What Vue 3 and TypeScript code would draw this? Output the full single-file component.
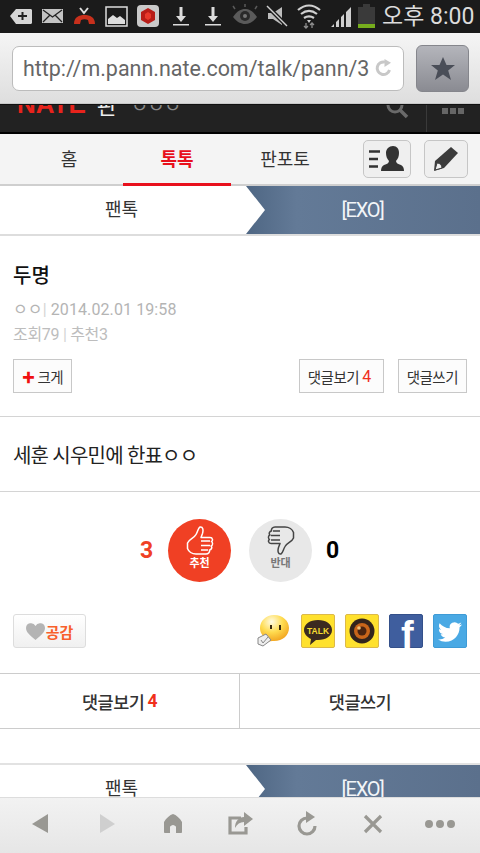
<template>
  <div class="phone">
    <!-- status bar icons live in one strip, they sit at irregular spacing -->
    <div class="status">
      <svg class="status-icons" width="378" height="33" viewBox="0 0 378 33">
        <path d="M10 16 16 9h15a2 2 0 0 1 1 1v13a2 2 0 0 1-1 1H16z" fill="#d6d6d6" />
        <path d="M18 16h9M22.500 12v8" stroke="#222" stroke-width="2" />
        <rect x="42" y="9" width="21" height="14" fill="#c4c4c4" />
        <path d="M43 10 52.500 17 62 10M43 22 50 15M62 22 55 15" stroke="#222" stroke-width="1.300" fill="none" />
        <path d="M74 24c0-7 5-9 10.500-9S95 17 95 24h-6l-1-4c-2-1-5-1-7 0l-1 4z" fill="#c8301c" />
        <path d="M80 8l4 5 4-5 M84 13l-1-1" stroke="#ddd" stroke-width="2" fill="none" />
        <rect x="106" y="7" width="21" height="19" fill="none" stroke="#ddd" stroke-width="1.500" />
        <path d="M108 24v-5l5-4 4 3 3-2 5 4v4z" fill="#ddd" />
        <rect x="137" y="5" width="22" height="22" rx="4" fill="#c9c9c9" />
        <path d="M148 8l7 4v8l-7 4-7-4v-8z" fill="#b81d18" />
        <path d="M148 12l3 2v4l-3 2-3-2v-4z" fill="#e8392c" />
        <g v-for="x in downloadXs" :key="x" fill="#dcdcdc">
          <path :d="`M${x + 6.500} 7h3v9h3.500l-5 6-5-6h3.500z`" />
          <rect :x="x" y="24" width="16" height="1.500" />
        </g>
        <path d="M233 17c4-6 8-8 12-8s8 2 12 8c-4 5-8 7-12 7s-8-2-12-7z" fill="#5a5a5a" />
        <circle cx="245" cy="16" r="5" fill="#2a2a2a" />
        <circle cx="245" cy="16" r="2" fill="#777" />
        <path d="M235 9l-2-3M245 7V4M255 9l2-3" stroke="#5a5a5a" stroke-width="1.500" />
        <path d="M268 13h5l9-6v18l-9-6h-5z" fill="#bdbdbd" />
        <path d="M267 6l20 20" stroke="#1c1c1c" stroke-width="4" />
        <path d="M267 6l20 20" stroke="#d0d0d0" stroke-width="1.500" />
        <path d="M298 10c7-6 15-6 22 0M301 14c5-4 11-4 16 0M304 18c3-2 7-2 10 0" stroke="#cfcfcf" stroke-width="2.200" fill="none" />
        <path d="M307 20h4l-2 3z" fill="#cfcfcf" />
        <path d="M306 23v5M304 26l2 2 2-2M312 28v-5M310 25l2-2 2 2" stroke="#8f8f8f" stroke-width="1.300" fill="none" />
        <path d="M331 27l3-3v3zM336 27v-5l3-3v8zM341 27V17l3-3v13zM346 27V12l5-5v20z" fill="#cfcfcf" />
        <rect x="358" y="7" width="17" height="20" fill="#3a3a3a" />
        <rect x="363" y="4" width="7" height="3" fill="#3a3a3a" />
        <rect x="358" y="24" width="17" height="4" fill="#76ad1d" />
      </svg>
      <span class="clock">오후 8:00</span>
    </div>

    <div class="browser-bar">
      <div class="url-box">
        <span class="url">http://m.pann.nate.com/talk/pann/3</span>
        <svg width="18" height="18" viewBox="0 0 18 18">
          <path d="M14.500 11A6.300 6.300 0 1 1 10 3.100" fill="none" stroke="#c8c8c8" stroke-width="3" />
          <path d="M9.500 0 16 3.800 9.500 8z" fill="#c8c8c8" />
        </svg>
      </div>
      <div class="star-btn">
        <svg width="26" height="25" viewBox="0 0 26 25">
          <path d="M13 1l3.500 8H25l-6.800 5.500L21 24l-8-5.500L5 24l2.800-9.500L1 9h8.500z" fill="#4a4e58" />
        </svg>
      </div>
    </div>

    <div class="page">
      <header class="nate-head">
        <div class="brand">
          <b class="logo">NATE</b>
          <b class="pan">판</b>
          <span class="who">ㅇㅇㅇ</span>
        </div>
        <svg class="search" width="24" height="14" viewBox="0 0 24 14">
          <circle cx="9" cy="0" r="7" fill="none" stroke="#6a6a6a" stroke-width="3" />
          <path d="M14 5l7 7" stroke="#6a6a6a" stroke-width="3.500" />
        </svg>
        <div class="menu-cell">
          <i v-for="n in 3" :key="n"></i>
        </div>
      </header>

      <nav class="tabs">
        <a v-for="t in navItems" :key="t" class="tab" :class="{ on: t === '톡톡' }">{{ t }}</a>
        <div class="tool-btn user-btn">
          <svg width="36" height="26" viewBox="0 0 36 26">
            <path d="M0 5.500h11M0 13h9M0 20.500h9" stroke="#333" stroke-width="2.500" />
            <path d="M24 0c4 0 6 3 6 7 0 3-1 6-3 8 0 2 2 3 5 4 2 1 3 3 3 6H12c0-3 1-5 3-6 3-1 5-2 5-4-2-2-3-5-3-8 0-4 3-7 7-7z" fill="#333" />
          </svg>
        </div>
        <div class="tool-btn pen-btn">
          <svg width="26" height="26" viewBox="0 0 26 26">
            <path d="M18 1l7 6L11 22l-10 3 1-10z" fill="#3c3c3c" />
            <path d="M4 17c3 0 5 2 5 5l-7 2z" fill="#f0f0f0" stroke="#3c3c3c" stroke-width="1" />
          </svg>
        </div>
      </nav>

      <div class="crumb">
        <div class="crumb-left">팬톡</div>
        <div class="crumb-right">[EXO]</div>
      </div>

      <section class="post-head">
        <h1>두명</h1>
        <p class="meta">ㅇㅇ<em>|</em> 2014.02.01 19:58</p>
        <p class="meta small">조회79 <em>|</em> 추천3</p>
        <div class="post-actions">
          <a class="mini-btn"><b class="plus">✚</b> 크게</a>
          <span class="spacer"></span>
          <a class="mini-btn view-btn">댓글보기 <span class="red">4</span></a>
          <a class="mini-btn">댓글쓰기</a>
        </div>
      </section>

      <section class="post-body">세훈 시우민에 한표ㅇㅇ</section>

      <section class="vote">
        <span class="count up">3</span>
        <div class="circle yes">
          <svg width="28" height="29" viewBox="0 0 28 29">
            <path :d="thumbPath" fill="none" stroke="#fff" stroke-width="1.500" stroke-linejoin="round" />
            <path d="M15 15h9M15 19.500h9M15 24h7" stroke="#fff" stroke-width="1.300" />
          </svg>
          <span>추천</span>
        </div>
        <div class="circle no">
          <svg width="28" height="29" viewBox="0 0 28 29">
            <g transform="rotate(180 14 14.500)">
              <path :d="thumbPath" fill="none" stroke="#444" stroke-width="1.500" stroke-linejoin="round" />
              <path d="M15 15h9M15 19.500h9M15 24h7" stroke="#444" stroke-width="1.300" />
            </g>
          </svg>
          <span>반대</span>
        </div>
        <span class="count">0</span>
      </section>

      <section class="share">
        <a class="like">
          <svg width="19" height="17" viewBox="0 0 19 17">
            <path d="M9.500 17C4 12 0 9.500 0 5a5 5 0 0 1 9.500-2A5 5 0 0 1 19 5c0 4.500-4 7-9.500 12z" fill="#b4b4b4" />
          </svg>
          공감
        </a>
        <span class="spacer"></span>
        <svg class="sns" width="34" height="34" viewBox="0 0 34 34">
          <defs>
            <radialGradient id="smile" cx="0.400" cy="0.250" r="0.850">
              <stop offset="0" stop-color="#fffbe4" />
              <stop offset="0.450" stop-color="#ffdc50" />
              <stop offset="1" stop-color="#ee9412" />
            </radialGradient>
          </defs>
          <path d="M17 1c9 0 15 6 15 13s-6 13-15 13c-2 0-5 0-7 1 1-2 0-3-1-4-4-2-6-6-6-10C3 7 9 1 17 1z" fill="url(#smile)" />
          <path d="M14 11v4M23 11v5" stroke="#3a2a10" stroke-width="2" />
          <path d="M1 24l8-4 5 6-8 6-5-2z" fill="#eee" stroke="#888" />
          <path d="M4 26l2 3 5-6" fill="none" stroke="#888" />
        </svg>
        <svg class="sns" width="34" height="34" viewBox="0 0 34 34">
          <rect x="0.500" y="0.500" width="33" height="33" rx="1.500" fill="#ffe12e" stroke="#dcb94a" />
          <path d="M17 6c8 0 14 4 14 10s-6 10-14 10h-2l-6 5 1-6c-4-2-7-5-7-9C3 10 9 6 17 6z" fill="#3b2a20" />
          <text x="17" y="19.500" class="talk">TALK</text>
        </svg>
        <svg class="sns" width="34" height="34" viewBox="0 0 34 34">
          <rect x="0.500" y="0.500" width="33" height="33" rx="1.500" fill="#ffe12e" stroke="#dcb94a" />
          <circle cx="17" cy="17" r="12.500" fill="#33241c" />
          <circle cx="17" cy="17" r="8" fill="#c8651a" />
          <circle cx="17" cy="17" r="4.500" fill="#4a2410" />
          <circle cx="14" cy="14" r="1.800" fill="#f2c27a" />
        </svg>
        <svg class="sns" width="34" height="34" viewBox="0 0 34 34">
          <rect x="0.500" y="0.500" width="33" height="33" rx="1.500" fill="#3f5e9e" stroke="#34508a" />
          <text x="12" y="34" class="fb">f</text>
        </svg>
        <svg class="sns" width="34" height="34" viewBox="0 0 34 34">
          <rect x="0.500" y="0.500" width="33" height="33" rx="1.500" fill="#4aa9e4" stroke="#3f9bd6" />
          <path transform="translate(5 6) scale(1)" fill="#fff" :d="birdPath" />
        </svg>
      </section>

      <div class="big-tabs">
        <a>댓글보기 <span class="red">4</span></a>
        <a>댓글쓰기</a>
      </div>

      <div class="crumb lower">
        <div class="crumb-left">팬톡</div>
        <div class="crumb-right">[EXO]</div>
      </div>
    </div>

    <footer class="toolbar">
      <div v-for="b in toolbar" :key="b.name" class="tb-item">
        <svg width="30" height="30" viewBox="0 0 30 30">
          <path v-if="b.fill" :d="b.d" :fill="b.fill" />
          <path v-else :d="b.d" fill="none" :stroke="b.stroke" stroke-width="3.200" />
          <path v-if="b.extra" :d="b.extra" :fill="b.stroke" />
        </svg>
      </div>
    </footer>
  </div>
</template>

<script setup lang="ts">
interface ToolItem {
  name: string
  d: string
  fill?: string
  stroke?: string
  extra?: string
}

const navItems = ['홈', '톡톡', '판포토']
const downloadXs = [173, 205]

const thumbPath =
  'M1.500 17C3 13 8 12.500 10 8.500 12 5 12 2 14 1c3-.5 3.500 3 2.500 6.500L15 11.500h9c3 0 3 3.500 1.500 4 1.500 1 1.500 4-.5 4.500 1.500 1 .5 4-1.500 4 .5 2-1 4-3.500 4H10c-4 0-7.500-2.500-8.500-5.500z'

const birdPath =
  'M23.953 4.570a10 10 0 01-2.825.775 4.958 4.958 0 002.163-2.723c-.951.555-2.005.959-3.127 1.184a4.920 4.920 0 00-8.384 4.482C7.690 8.095 4.067 6.130 1.640 3.162a4.822 4.822 0 00-.666 2.475c0 1.710.870 3.213 2.188 4.096a4.904 4.904 0 01-2.228-.616v.060a4.923 4.923 0 003.946 4.827 4.996 4.996 0 01-2.212.085 4.936 4.936 0 004.604 3.417 9.867 9.867 0 01-6.102 2.105c-.390 0-.779-.023-1.170-.067a13.995 13.995 0 007.557 2.209c9.053 0 13.998-7.496 13.998-13.985 0-.210 0-.420-.015-.630A9.935 9.935 0 0024 4.590z'

const toolbar: ToolItem[] = [
  { name: 'back', d: 'M7 15 23 5v19z', fill: '#999893' },
  { name: 'forward', d: 'M8 5l15 10-15 9z', fill: '#cfcfcf' },
  { name: 'home', d: 'M15 5c3 1 7 4 9 8v10c0 1-1 1-1 1h-5v-6c0-1-2-2-3-2s-3 1-3 2v6H7s-1 0-1-1V13c2-4 6-7 9-8z', fill: '#999893' },
  {
    name: 'share',
    d: 'M16 9H5v15h16v-6',
    stroke: '#999893',
    extra: 'M19 3l9 7-9 7v-4c-4 0-7 2-9 6 0-7 4-11 9-11z',
  },
  {
    name: 'reload',
    d: 'M23 17a8 8 0 1 1-8-8',
    stroke: '#999893',
    extra: 'M14 2l9 6-9 6z',
  },
  { name: 'close', d: 'M7 7l16 16M23 7 7 23', stroke: '#999893' },
  { name: 'more', d: 'M8 15a4 4 0 1 1-8 0 4 4 0 0 1 8 0zM19 15a4 4 0 1 1-8 0 4 4 0 0 1 8 0zM30 15a4 4 0 1 1-8 0 4 4 0 0 1 8 0z', fill: '#999893' },
]
</script>

<style scoped>
.phone {
  width: 480px;
  height: 853px;
  display: flex;
  flex-direction: column;
  overflow: hidden;
  background: #fff;
  color: #222;
  font-family: Roboto, 'Noto Sans CJK KR', sans-serif;
}

.status {
  height: 33px;
  flex: none;
  display: flex;
  align-items: center;
  background: #1b1b1b;
}
.status-icons {
  flex: none;
}
.clock {
  margin-left: 4px;
  font-size: 23px;
  line-height: 33px;
  color: #dcdcdc;
  white-space: nowrap;
}

.browser-bar {
  height: 71px;
  flex: none;
  display: flex;
  align-items: center;
  gap: 12px;
  padding: 0 11px 0 12px;
  box-sizing: border-box;
  background: linear-gradient(#f5f5f5, #dedede);
  border-bottom: 1px solid #c8c8c8;
}
.url-box {
  flex: 1;
  height: 45px;
  box-sizing: border-box;
  display: flex;
  align-items: center;
  justify-content: space-between;
  padding: 0 10px;
  background: #fff;
  border: 1px solid #bcbcbc;
  border-radius: 7px;
  overflow: hidden;
}
.url {
  font-size: 21.450px;
  color: #666;
  white-space: nowrap;
}
.star-btn {
  width: 53px;
  height: 47px;
  box-sizing: border-box;
  display: flex;
  align-items: center;
  justify-content: center;
  background: linear-gradient(#b4b5bb, #8a8b92);
  border: 1px solid #85868c;
  border-radius: 6px;
}

.page {
  flex: 1;
  min-height: 0;
  overflow: hidden;
}

.nate-head {
  height: 30px;
  box-sizing: border-box;
  display: flex;
  align-items: flex-start;
  background: #222;
  border-top: 1px solid #111;
  border-bottom: 2px solid #000;
  overflow: hidden;
}
.brand {
  display: flex;
  align-items: center;
  gap: 11px;
  margin-top: -13px;
  padding-left: 17px;
  height: 24px;
  flex: 1;
}
.logo {
  font-family: 'Liberation Sans', sans-serif;
  font-size: 26px;
  color: #e8231c;
}
.pan {
  font-size: 22px;
  font-weight: 400;
  color: #eee;
}
.who {
  margin-left: 3px;
  font-size: 19px;
  letter-spacing: -1px;
  color: #8a8a8a;
}
.search {
  margin-right: 16px;
}
.menu-cell {
  width: 54px;
  height: 29px;
  box-sizing: border-box;
  display: flex;
  gap: 2px;
  padding: 3px 0 0 15px;
  border-left: 1px solid #3a3a3a;
}
.menu-cell i {
  width: 6px;
  height: 6px;
  background: #666;
}

.tabs {
  height: 52px;
  box-sizing: border-box;
  display: flex;
  align-items: flex-start;
  padding-left: 15px;
  background: #f4f4f4;
  border-bottom: 2px solid #cfcfcf;
}
.tab {
  width: 108px;
  height: 52px;
  box-sizing: border-box;
  text-align: center;
  font-size: 18px;
  line-height: 52px;
  color: #333;
}
.tab.on {
  color: #e8101c;
  font-weight: 700;
  border-bottom: 3px solid #e8101c;
}
.tool-btn {
  height: 38px;
  margin-top: 6px;
  box-sizing: border-box;
  display: flex;
  align-items: center;
  justify-content: center;
  background: #efefef;
  border: 1.500px solid #c6c6c6;
  border-radius: 5px;
}
.user-btn {
  width: 48px;
  margin-left: 24px;
}
.pen-btn {
  width: 44px;
  margin-left: 13px;
}

.crumb {
  height: 50px;
  box-sizing: border-box;
  display: flex;
  font-size: 18px;
  border-bottom: 2px solid #ddd;
}
.crumb-left {
  width: 265px;
  flex: none;
  padding-right: 22px;
  box-sizing: border-box;
  text-align: center;
  line-height: 48px;
  color: #333;
  background: #fff;
  clip-path: polygon(0 0, 246px 0, 100% 50%, 246px 100%, 0 100%);
  position: relative;
  z-index: 1;
}
.crumb-right {
  flex: 1;
  margin-left: -20px;
  box-sizing: border-box;
  text-align: center;
  font-size: 20px;
  letter-spacing: -1.200px;
  line-height: 48px;
  color: #f2f5f8;
  background: linear-gradient(90deg, #4e6683, #637a97 22%, #5b708c);
}

.post-head {
  padding: 27px 13px 23px 13px;
  border-bottom: 1px solid #d4d4d4;
}
.post-head h1 {
  margin: 0;
  font-size: 20px;
  line-height: 26px;
  font-weight: 500;
  color: #111;
}
.meta {
  margin: 9px 0 0;
  font-size: 16px;
  line-height: 24px;
  letter-spacing: 0.100px;
  color: #b4b4b4;
}
.meta.small {
  margin-top: 1px;
  color: #bdbdbd;
  letter-spacing: -0.300px;
}
.meta em {
  font-style: normal;
  color: #d4d4d4;
}
.post-actions {
  display: flex;
  gap: 14px;
  margin-top: 12px;
}
.spacer {
  flex: 1;
}
.mini-btn {
  height: 34px;
  padding: 0 8px;
  box-sizing: border-box;
  display: flex;
  align-items: center;
  gap: 3px;
  font-size: 14.500px;
  color: #333;
  letter-spacing: -0.500px;
  background: #fcfcfc;
  border: 1.500px solid #c8c8c8;
  white-space: nowrap;
}
.view-btn {
  padding-right: 12px;
}
.view-btn .red {
  font-size: 16px;
}
.plus {
  font-size: 13px;
  color: #f01010;
}
.red {
  color: #f0301c;
}

.post-body {
  height: 75px;
  box-sizing: border-box;
  padding: 0 13px;
  display: flex;
  align-items: center;
  font-size: 20px;
  letter-spacing: -0.800px;
  color: #222;
  border-bottom: 1px solid #d4d4d4;
}

.vote {
  display: flex;
  align-items: flex-start;
  justify-content: center;
  height: 122px;
  box-sizing: border-box;
  padding-top: 27px;
}
.count {
  width: 14px;
  font-size: 23px;
  line-height: 63px;
  font-weight: 700;
  color: #000;
  margin-left: 14px;
}
.count.up {
  color: #f04024;
  margin: 0 14px 0 0;
}
.circle {
  width: 63px;
  height: 63px;
  border-radius: 50%;
  display: flex;
  flex-direction: column;
  align-items: center;
  padding-top: 7px;
  box-sizing: border-box;
  font-size: 11px;
  font-weight: 700;
}
.circle span {
  margin-top: 1px;
  line-height: 16px;
}
.circle.yes {
  background: #f04024;
  color: #fff;
}
.circle.no {
  background: #e8e8e8;
  color: #777;
  margin-left: 18px;
}

.share {
  height: 59px;
  display: flex;
  align-items: flex-start;
  gap: 10px;
  padding: 0 13px;
}
.like {
  width: 73px;
  height: 34px;
  box-sizing: border-box;
  display: flex;
  align-items: center;
  justify-content: center;
  gap: 1px;
  font-size: 15px;
  font-weight: 700;
  color: #f8602c;
  background: linear-gradient(#fff, #f0f0f0);
  border: 1px solid #ddd;
  border-radius: 3px;
}
.sns {
  flex: none;
}
.talk {
  font: 800 8.500px 'Liberation Sans', sans-serif;
  fill: #f6dc30;
  text-anchor: middle;
}
.fb {
  font: 700 38px 'Liberation Sans', sans-serif;
  fill: #fff;
}

.big-tabs {
  display: flex;
  height: 56px;
  box-sizing: border-box;
  border-top: 1.500px solid #ccc;
  border-bottom: 1.500px solid #ccc;
  font-size: 17.500px;
  font-weight: 500;
  letter-spacing: -0.500px;
  color: #333;
}
.big-tabs a {
  flex: 1;
  box-sizing: border-box;
  display: flex;
  align-items: center;
  justify-content: center;
  gap: 3px;
}
.big-tabs a:first-child {
  flex: none;
  width: 240px;
  border-right: 1.500px solid #ccc;
}
.big-tabs .red {
  font-weight: 700;
}

.crumb.lower {
  height: 52px;
  margin-top: 34px;
  border-top: 2px solid #e2e2e2;
}

.toolbar {
  height: 56px;
  flex: none;
  display: flex;
  padding: 0 7px;
  box-sizing: border-box;
  background: linear-gradient(#f2f2f2, #e6e6e6);
  border-top: 1px solid #ddd;
}
.tb-item {
  flex: 1;
  display: flex;
  align-items: flex-start;
  justify-content: center;
  padding-top: 11px;
}
</style>

<style>
html,
body {
  margin: 0;
  background: #fff;
}
</style>
